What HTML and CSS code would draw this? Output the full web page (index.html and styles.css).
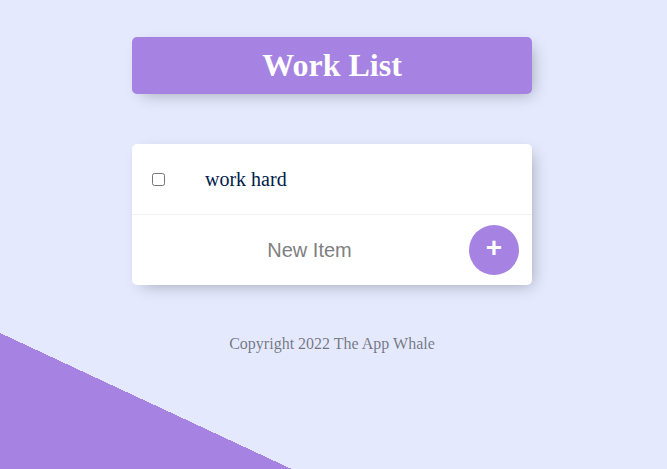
FILE: index.html
```html
<!DOCTYPE html>
<html lang="en">
<head>
<meta charset="utf-8">
<title>Work List</title>
<link rel="stylesheet" href="styles.css">
</head>
<body>
  <div class="box heading">
    <h1>Work List</h1>
  </div>
  <div class="box list">
    <div class="item">
      <input type="checkbox" class="check">
      <p class="item-text">work hard</p>
    </div>
    <form class="item add-form" onsubmit="return false">
      <input type="text" class="new-item" name="newItem" placeholder="New Item" autocomplete="off">
      <button type="submit" class="add-btn">+</button>
    </form>
  </div>
  <footer class="footer">Copyright 2022 The App Whale</footer>
</body>
</html>
```
FILE: styles.css
```css
html {
  background: linear-gradient(25deg, #A683E3 50%, #E4E9FD 50%) 0 0 / 100% 977px no-repeat, #E4E9FD;
  font-family: "Liberation Serif", "Times New Roman", serif;
}

body {
  margin: 0;
  padding: 37px 3px 0 0;
}

.box {
  width: 400px;
  margin: 0 auto;
  background: #fff;
  border-radius: 5px;
  box-shadow: 5px 5px 15px -5px rgba(0, 0, 0, 0.3);
}

.heading {
  background-color: #A683E3;
  text-align: center;
}

.heading h1 {
  margin: 0;
  padding: 10px;
  color: #fff;
  font-size: 32px;
  font-weight: bold;
  line-height: 37px;
}

.list {
  margin-top: 50px;
}

.item {
  min-height: 70px;
  display: flex;
  align-items: center;
  border-bottom: 1px solid #F1F1F1;
}

.item:last-child {
  border-bottom: 0;
}

.check {
  margin: 20px;
  width: 13px;
  height: 13px;
}

.item-text {
  margin: 0;
  padding: 20px;
  font-size: 20px;
  color: #00204a;
}

.add-form {
  margin: 0 0 0 20px;
  gap: 4px;
}

.new-item {
  box-sizing: border-box;
  width: 313px;
  height: 60px;
  padding: 0 0 0 2px;
  border: none;
  text-align: center;
  font-family: "Liberation Sans", Arial, sans-serif;
  font-size: 20px;
  color: #000;
  background: transparent;
}

.new-item::placeholder {
  color: grey;
  opacity: 1;
}

.new-item:focus {
  outline: none;
  box-shadow: inset 0 -3px 0 0 #A683E3;
}

.add-btn {
  width: 50px;
  height: 50px;
  border-radius: 50%;
  border: 0;
  padding: 0 0 4px;
  background-color: #A683E3;
  color: #fff;
  font-family: "Liberation Sans", Arial, sans-serif;
  font-size: 28px;
  font-weight: bold;
  line-height: 1;
}

.footer {
  margin-top: 50px;
  text-align: center;
  color: rgba(0, 0, 0, 0.5);
  font-size: 16px;
}
```
